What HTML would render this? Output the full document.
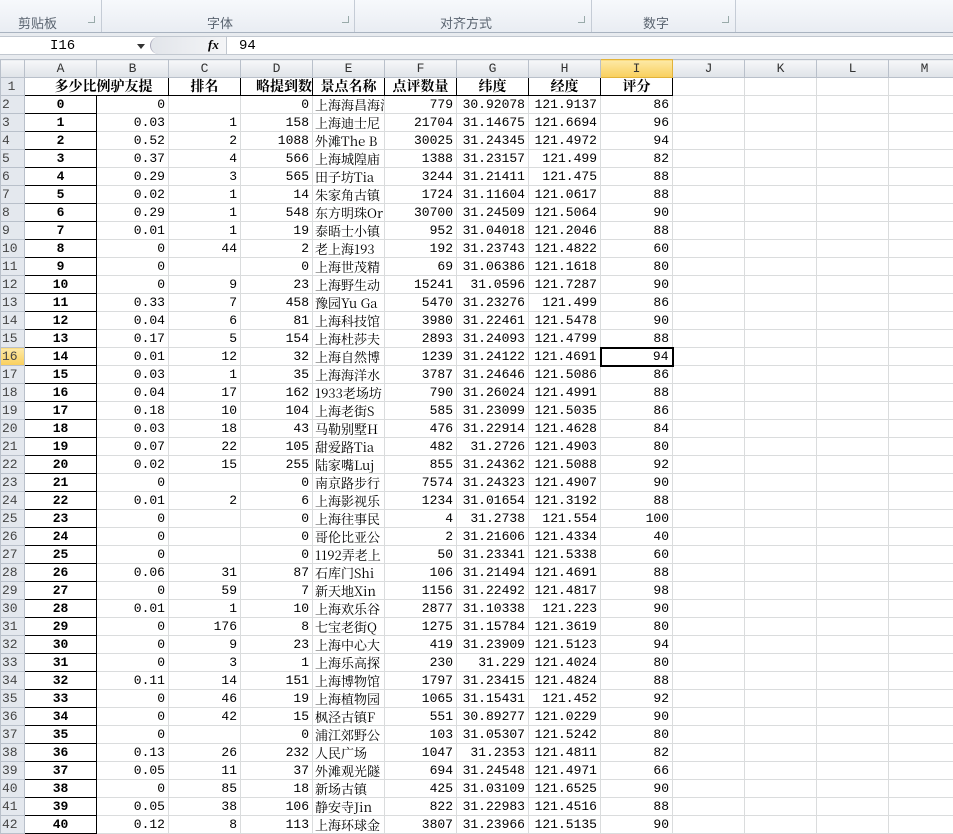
<!DOCTYPE html>
<html><head><meta charset="utf-8"><style>
*{margin:0;padding:0;box-sizing:border-box}
body{width:953px;height:833px;overflow:hidden;background:#fff;font-family:"Liberation Mono","Noto Serif CJK SC",monospace;position:relative}
.rib{position:absolute;left:0;top:0;width:953px;height:33px;background:linear-gradient(#f7f9fc,#e9edf3);border-bottom:1px solid #a9b3c0}
.gl{position:absolute;top:13px;font:13px "Liberation Sans","Noto Sans CJK SC",sans-serif;color:#5a6470}
.sep{position:absolute;top:0;width:1px;height:32px;background:#c5ccd6}
.dl{position:absolute;top:16px;width:7px;height:7px;border:1px solid #9aa;border-top:none;border-left:none}
.fb{position:absolute;left:0;top:33px;width:953px;height:26px;background:#e8ebef}
.fbw{position:absolute;left:0;top:36px;width:953px;height:19px;background:#fff;border-top:1px solid #c2c8d0;border-bottom:1px solid #c2c8d0}
table{position:absolute;left:0;top:59px;width:960px;border-collapse:collapse;table-layout:fixed}
tr{height:18px}
td{height:18px;padding:0 3px;font-size:13px;line-height:15px;text-align:right;border:1px solid #dadcdd;white-space:nowrap;overflow:hidden;color:#000}
tr.h td{background:linear-gradient(#f6f7f9,#dfe3e8);border:1px solid #b9c0ca;text-align:center;color:#333;font-size:13px}
td.r{background:#e4e8ee;border:1px solid #b9c0ca;text-align:left;padding-left:1px;color:#444;font-size:13px}
td.a{border:1px solid #000;border-top:none;text-align:center;font-weight:bold}
td.e{text-align:left;font-family:"Noto Serif CJK SC","Liberation Mono",serif;font-size:13px;padding-left:2px}
tr.t td{font-weight:bold;text-align:center;border-bottom:1px solid #000;font-family:"Noto Serif CJK SC",serif;font-size:14px}
</style></head><body>
<div class="rib">
<div class="gl" style="left:18px">剪贴板</div><div class="dl" style="left:88px"></div><div class="sep" style="left:101px"></div>
<div class="gl" style="left:207px">字体</div><div class="dl" style="left:342px"></div><div class="sep" style="left:354px"></div>
<div class="gl" style="left:440px">对齐方式</div><div class="dl" style="left:578px"></div><div class="sep" style="left:591px"></div>
<div class="gl" style="left:643px">数字</div><div class="dl" style="left:722px"></div><div class="sep" style="left:735px"></div>
</div>
<div class="fb"></div>
<div class="fbw">
<div style="position:absolute;left:50px;top:1px;font-size:14px">I16</div>
<div style="position:absolute;left:137px;top:7px;border-left:4px solid transparent;border-right:4px solid transparent;border-top:5px solid #333"></div>
<div style="position:absolute;left:150px;top:0;width:76px;height:17px;border-left:1px solid #aab;background:linear-gradient(90deg,#e2e5ea,#f4f5f7);border-radius:9px 0 0 9px"></div>
<div style="position:absolute;left:208px;top:0;font:italic bold 13px 'Liberation Serif',serif">fx</div>
<div style="position:absolute;left:226px;top:0;width:1px;height:17px;background:#c2c8d0"></div>
<div style="position:absolute;left:239px;top:1px;font-size:14px">94</div>
</div>
<table>
<colgroup><col style="width:24px"><col style="width:72px"><col style="width:72px"><col style="width:72px"><col style="width:72px"><col style="width:72px"><col style="width:72px"><col style="width:72px"><col style="width:72px"><col style="width:72px"><col style="width:72px"><col style="width:72px"><col style="width:72px"><col style="width:72px"></colgroup>
<tr class="h"><td></td><td>A</td><td>B</td><td>C</td><td>D</td><td>E</td><td>F</td><td>G</td><td>H</td><td style="background:linear-gradient(#fde9a6,#f9cf5c);border-color:#e2b33a">I</td><td>J</td><td>K</td><td>L</td><td>M</td></tr>
<tr class="t"><td class="r" style="font-weight:normal;font-family:'Liberation Mono',monospace;font-size:13px;border-bottom:1px solid #b9c0ca">1</td><td style="border-right:none;text-align:right;padding-right:0">多少比</td><td style="border-left:none;border-right:1px solid #000;text-align:left;padding-left:0">例驴友提</td><td style="border-right:1px solid #000">排名</td><td style="border-right:1px solid #000;text-align:right;padding-right:0">略提到数</td><td style="border-right:1px solid #000">景点名称</td><td style="border-right:1px solid #000">点评数量</td><td style="border-right:1px solid #000">纬度</td><td style="border-right:1px solid #000">经度</td><td style="border-right:1px solid #000">评分</td><td style="border-bottom-color:#dadcdd"></td><td style="border-bottom-color:#dadcdd"></td><td style="border-bottom-color:#dadcdd"></td><td style="border-bottom-color:#dadcdd"></td></tr>
<tr><td class="r">2</td><td class="a">0</td><td>0</td><td></td><td>0</td><td class="e">上海海昌海洋</td><td>779</td><td>30.92078</td><td>121.9137</td><td>86</td><td></td><td></td><td></td><td></td></tr>
<tr><td class="r">3</td><td class="a">1</td><td>0.03</td><td>1</td><td>158</td><td class="e">上海迪士尼</td><td>21704</td><td>31.14675</td><td>121.6694</td><td>96</td><td></td><td></td><td></td><td></td></tr>
<tr><td class="r">4</td><td class="a">2</td><td>0.52</td><td>2</td><td>1088</td><td class="e">外滩The B</td><td>30025</td><td>31.24345</td><td>121.4972</td><td>94</td><td></td><td></td><td></td><td></td></tr>
<tr><td class="r">5</td><td class="a">3</td><td>0.37</td><td>4</td><td>566</td><td class="e">上海城隍庙</td><td>1388</td><td>31.23157</td><td>121.499</td><td>82</td><td></td><td></td><td></td><td></td></tr>
<tr><td class="r">6</td><td class="a">4</td><td>0.29</td><td>3</td><td>565</td><td class="e">田子坊Tia</td><td>3244</td><td>31.21411</td><td>121.475</td><td>88</td><td></td><td></td><td></td><td></td></tr>
<tr><td class="r">7</td><td class="a">5</td><td>0.02</td><td>1</td><td>14</td><td class="e">朱家角古镇</td><td>1724</td><td>31.11604</td><td>121.0617</td><td>88</td><td></td><td></td><td></td><td></td></tr>
<tr><td class="r">8</td><td class="a">6</td><td>0.29</td><td>1</td><td>548</td><td class="e">东方明珠Or</td><td>30700</td><td>31.24509</td><td>121.5064</td><td>90</td><td></td><td></td><td></td><td></td></tr>
<tr><td class="r">9</td><td class="a">7</td><td>0.01</td><td>1</td><td>19</td><td class="e">泰晤士小镇</td><td>952</td><td>31.04018</td><td>121.2046</td><td>88</td><td></td><td></td><td></td><td></td></tr>
<tr><td class="r">10</td><td class="a">8</td><td>0</td><td>44</td><td>2</td><td class="e">老上海193</td><td>192</td><td>31.23743</td><td>121.4822</td><td>60</td><td></td><td></td><td></td><td></td></tr>
<tr><td class="r">11</td><td class="a">9</td><td>0</td><td></td><td>0</td><td class="e">上海世茂精</td><td>69</td><td>31.06386</td><td>121.1618</td><td>80</td><td></td><td></td><td></td><td></td></tr>
<tr><td class="r">12</td><td class="a">10</td><td>0</td><td>9</td><td>23</td><td class="e">上海野生动</td><td>15241</td><td>31.0596</td><td>121.7287</td><td>90</td><td></td><td></td><td></td><td></td></tr>
<tr><td class="r">13</td><td class="a">11</td><td>0.33</td><td>7</td><td>458</td><td class="e">豫园Yu Ga</td><td>5470</td><td>31.23276</td><td>121.499</td><td>86</td><td></td><td></td><td></td><td></td></tr>
<tr><td class="r">14</td><td class="a">12</td><td>0.04</td><td>6</td><td>81</td><td class="e">上海科技馆</td><td>3980</td><td>31.22461</td><td>121.5478</td><td>90</td><td></td><td></td><td></td><td></td></tr>
<tr><td class="r">15</td><td class="a">13</td><td>0.17</td><td>5</td><td>154</td><td class="e">上海杜莎夫</td><td>2893</td><td>31.24093</td><td>121.4799</td><td>88</td><td></td><td></td><td></td><td></td></tr>
<tr><td class="r" style="background:linear-gradient(#fde9a6,#f9cf5c)">16</td><td class="a">14</td><td>0.01</td><td>12</td><td>32</td><td class="e">上海自然博</td><td>1239</td><td>31.24122</td><td>121.4691</td><td style="border:2px solid #000">94</td><td></td><td></td><td></td><td></td></tr>
<tr><td class="r">17</td><td class="a">15</td><td>0.03</td><td>1</td><td>35</td><td class="e">上海海洋水</td><td>3787</td><td>31.24646</td><td>121.5086</td><td>86</td><td></td><td></td><td></td><td></td></tr>
<tr><td class="r">18</td><td class="a">16</td><td>0.04</td><td>17</td><td>162</td><td class="e">1933老场坊</td><td>790</td><td>31.26024</td><td>121.4991</td><td>88</td><td></td><td></td><td></td><td></td></tr>
<tr><td class="r">19</td><td class="a">17</td><td>0.18</td><td>10</td><td>104</td><td class="e">上海老街S</td><td>585</td><td>31.23099</td><td>121.5035</td><td>86</td><td></td><td></td><td></td><td></td></tr>
<tr><td class="r">20</td><td class="a">18</td><td>0.03</td><td>18</td><td>43</td><td class="e">马勒别墅H</td><td>476</td><td>31.22914</td><td>121.4628</td><td>84</td><td></td><td></td><td></td><td></td></tr>
<tr><td class="r">21</td><td class="a">19</td><td>0.07</td><td>22</td><td>105</td><td class="e">甜爱路Tia</td><td>482</td><td>31.2726</td><td>121.4903</td><td>80</td><td></td><td></td><td></td><td></td></tr>
<tr><td class="r">22</td><td class="a">20</td><td>0.02</td><td>15</td><td>255</td><td class="e">陆家嘴Luj</td><td>855</td><td>31.24362</td><td>121.5088</td><td>92</td><td></td><td></td><td></td><td></td></tr>
<tr><td class="r">23</td><td class="a">21</td><td>0</td><td></td><td>0</td><td class="e">南京路步行</td><td>7574</td><td>31.24323</td><td>121.4907</td><td>90</td><td></td><td></td><td></td><td></td></tr>
<tr><td class="r">24</td><td class="a">22</td><td>0.01</td><td>2</td><td>6</td><td class="e">上海影视乐</td><td>1234</td><td>31.01654</td><td>121.3192</td><td>88</td><td></td><td></td><td></td><td></td></tr>
<tr><td class="r">25</td><td class="a">23</td><td>0</td><td></td><td>0</td><td class="e">上海往事民</td><td>4</td><td>31.2738</td><td>121.554</td><td>100</td><td></td><td></td><td></td><td></td></tr>
<tr><td class="r">26</td><td class="a">24</td><td>0</td><td></td><td>0</td><td class="e">哥伦比亚公</td><td>2</td><td>31.21606</td><td>121.4334</td><td>40</td><td></td><td></td><td></td><td></td></tr>
<tr><td class="r">27</td><td class="a">25</td><td>0</td><td></td><td>0</td><td class="e">1192弄老上</td><td>50</td><td>31.23341</td><td>121.5338</td><td>60</td><td></td><td></td><td></td><td></td></tr>
<tr><td class="r">28</td><td class="a">26</td><td>0.06</td><td>31</td><td>87</td><td class="e">石库门Shi</td><td>106</td><td>31.21494</td><td>121.4691</td><td>88</td><td></td><td></td><td></td><td></td></tr>
<tr><td class="r">29</td><td class="a">27</td><td>0</td><td>59</td><td>7</td><td class="e">新天地Xin</td><td>1156</td><td>31.22492</td><td>121.4817</td><td>98</td><td></td><td></td><td></td><td></td></tr>
<tr><td class="r">30</td><td class="a">28</td><td>0.01</td><td>1</td><td>10</td><td class="e">上海欢乐谷</td><td>2877</td><td>31.10338</td><td>121.223</td><td>90</td><td></td><td></td><td></td><td></td></tr>
<tr><td class="r">31</td><td class="a">29</td><td>0</td><td>176</td><td>8</td><td class="e">七宝老街Q</td><td>1275</td><td>31.15784</td><td>121.3619</td><td>80</td><td></td><td></td><td></td><td></td></tr>
<tr><td class="r">32</td><td class="a">30</td><td>0</td><td>9</td><td>23</td><td class="e">上海中心大</td><td>419</td><td>31.23909</td><td>121.5123</td><td>94</td><td></td><td></td><td></td><td></td></tr>
<tr><td class="r">33</td><td class="a">31</td><td>0</td><td>3</td><td>1</td><td class="e">上海乐高探</td><td>230</td><td>31.229</td><td>121.4024</td><td>80</td><td></td><td></td><td></td><td></td></tr>
<tr><td class="r">34</td><td class="a">32</td><td>0.11</td><td>14</td><td>151</td><td class="e">上海博物馆</td><td>1797</td><td>31.23415</td><td>121.4824</td><td>88</td><td></td><td></td><td></td><td></td></tr>
<tr><td class="r">35</td><td class="a">33</td><td>0</td><td>46</td><td>19</td><td class="e">上海植物园</td><td>1065</td><td>31.15431</td><td>121.452</td><td>92</td><td></td><td></td><td></td><td></td></tr>
<tr><td class="r">36</td><td class="a">34</td><td>0</td><td>42</td><td>15</td><td class="e">枫泾古镇F</td><td>551</td><td>30.89277</td><td>121.0229</td><td>90</td><td></td><td></td><td></td><td></td></tr>
<tr><td class="r">37</td><td class="a">35</td><td>0</td><td></td><td>0</td><td class="e">浦江郊野公</td><td>103</td><td>31.05307</td><td>121.5242</td><td>80</td><td></td><td></td><td></td><td></td></tr>
<tr><td class="r">38</td><td class="a">36</td><td>0.13</td><td>26</td><td>232</td><td class="e">人民广场</td><td>1047</td><td>31.2353</td><td>121.4811</td><td>82</td><td></td><td></td><td></td><td></td></tr>
<tr><td class="r">39</td><td class="a">37</td><td>0.05</td><td>11</td><td>37</td><td class="e">外滩观光隧</td><td>694</td><td>31.24548</td><td>121.4971</td><td>66</td><td></td><td></td><td></td><td></td></tr>
<tr><td class="r">40</td><td class="a">38</td><td>0</td><td>85</td><td>18</td><td class="e">新场古镇</td><td>425</td><td>31.03109</td><td>121.6525</td><td>90</td><td></td><td></td><td></td><td></td></tr>
<tr><td class="r">41</td><td class="a">39</td><td>0.05</td><td>38</td><td>106</td><td class="e">静安寺Jin</td><td>822</td><td>31.22983</td><td>121.4516</td><td>88</td><td></td><td></td><td></td><td></td></tr>
<tr><td class="r">42</td><td class="a">40</td><td>0.12</td><td>8</td><td>113</td><td class="e">上海环球金</td><td>3807</td><td>31.23966</td><td>121.5135</td><td>90</td><td></td><td></td><td></td><td></td></tr>
</table>
</body></html>
